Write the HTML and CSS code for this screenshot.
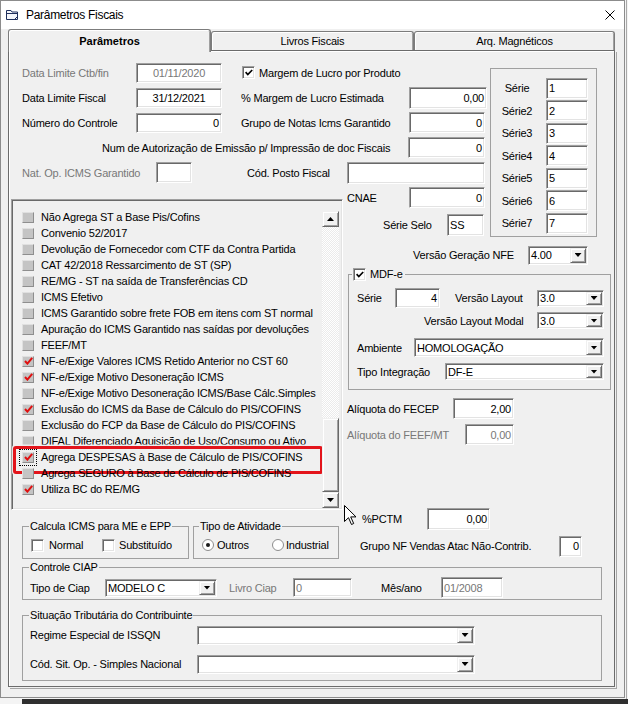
FILE: index.html
```html
<!DOCTYPE html>
<html lang="pt-BR">
<head>
<meta charset="utf-8">
<title>Parâmetros Fiscais</title>
<link rel="stylesheet" href="styles.css">
</head>
<body>
<div class="window">
  <div class="titlebar">
    <svg class="app-icon" width="13" height="12" viewBox="0 0 13 12">
      <path d="M0.5 1.5h4.5l1 1.5h5.5v7.5h-11z" fill="#f4f6fb" stroke="#1f2f5c"/>
      <path d="M0.5 4.5h11" stroke="#1f2f5c"/>
      <path d="M8.5 10.5l3-3" stroke="#1f2f5c"/>
    </svg>
    <span class="title">Parâmetros Fiscais</span>
    <svg class="close" width="10" height="10" viewBox="0 0 10 10"><path d="M0.5 0.5l9 9M9.5 0.5l-9 9" stroke="#000" fill="none"/></svg>
  </div>

  <div class="tabs">
    <div class="tab active">Parâmetros</div>
    <div class="tab">Livros Fiscais</div>
    <div class="tab last">Arq. Magnéticos</div>
  </div>

  <div class="panel">
    <div class="form-grid">
      <!-- top rows -->
      <div class="frow r1">
        <span class="lbl dis l-date">Data Limite Ctb/fin</span>
        <span class="edit c dis e-date">01/11/2020</span>
        <span class="chk chk-margem"><svg width="8" height="7" viewBox="0 0 8 7"><path d="M0.6 3.2l2.2 2.3L7.2 1" fill="none" stroke="#000" stroke-width="1.7"/></svg></span>
        <span class="lbl l-after-chk">Margem de Lucro por Produto</span>
      </div>
      <div class="frow r2">
        <span class="lbl l-date">Data Limite Fiscal</span>
        <span class="edit c e-date">31/12/2021</span>
        <span class="lbl l-mid">% Margem de Lucro Estimada</span>
        <span class="edit r e-margem">0,00</span>
      </div>
      <div class="frow r3">
        <span class="lbl l-date">Número do Controle</span>
        <span class="edit r e-date">0</span>
        <span class="lbl l-mid">Grupo de Notas Icms Garantido</span>
        <span class="edit r e-grupo">0</span>
      </div>
      <div class="frow r4">
        <span class="lbl l-autoriz">Num de Autorização de Emissão p/ Impressão de doc Fiscais</span>
        <span class="edit r e-autoriz">0</span>
      </div>
      <div class="frow r5">
        <span class="lbl dis l-natop">Nat. Op. ICMS Garantido</span>
        <span class="edit e-natop"></span>
        <span class="lbl l-posto">Cód. Posto Fiscal</span>
        <span class="edit e-posto"></span>
      </div>

      <!-- series box -->
      <div class="series">
        <div class="srow"><span class="lbl">Série</span><span class="edit">1</span></div>
        <div class="srow"><span class="lbl">Série2</span><span class="edit">2</span></div>
        <div class="srow"><span class="lbl">Série3</span><span class="edit">3</span></div>
        <div class="srow"><span class="lbl">Série4</span><span class="edit">4</span></div>
        <div class="srow"><span class="lbl">Série5</span><span class="edit">5</span></div>
        <div class="srow"><span class="lbl">Série6</span><span class="edit">6</span></div>
        <div class="srow"><span class="lbl">Série7</span><span class="edit">7</span></div>
      </div>

      <!-- left column: option list and small groups -->
      <div class="left">
        <div class="checklist">
          <div class="items">
            <div class="item"><span class="lchk"></span>Não Agrega ST a Base Pis/Cofins</div>
            <div class="item"><span class="lchk"></span>Convenio 52/2017</div>
            <div class="item"><span class="lchk"></span>Devolução de Fornecedor com CTF da Contra Partida</div>
            <div class="item"><span class="lchk"></span>CAT 42/2018 Ressarcimento de ST (SP)</div>
            <div class="item"><span class="lchk"></span>RE/MG - ST na saída de Transferências CD</div>
            <div class="item"><span class="lchk"></span>ICMS Efetivo</div>
            <div class="item"><span class="lchk"></span>ICMS Garantido sobre frete FOB em itens com ST normal</div>
            <div class="item"><span class="lchk"></span>Apuração do ICMS Garantido nas saídas por devoluções</div>
            <div class="item"><span class="lchk"></span>FEEF/MT</div>
            <div class="item"><span class="lchk"><svg width="9" height="8" viewBox="0 0 9 8"><path d="M1 4l2.4 2.6L8.2 0.8" fill="none" stroke="#e01010" stroke-width="2"/></svg></span>NF-e/Exige Valores ICMS Retido Anterior no CST 60</div>
            <div class="item"><span class="lchk"><svg width="9" height="8" viewBox="0 0 9 8"><path d="M1 4l2.4 2.6L8.2 0.8" fill="none" stroke="#e01010" stroke-width="2"/></svg></span>NF-e/Exige Motivo Desoneração ICMS</div>
            <div class="item"><span class="lchk"></span>NF-e/Exige Motivo Desoneração ICMS/Base Cálc.Simples</div>
            <div class="item"><span class="lchk"><svg width="9" height="8" viewBox="0 0 9 8"><path d="M1 4l2.4 2.6L8.2 0.8" fill="none" stroke="#e01010" stroke-width="2"/></svg></span>Exclusão do ICMS da Base de Cálculo do PIS/COFINS</div>
            <div class="item"><span class="lchk"></span>Exclusão do FCP da Base de Cálculo do PIS/COFINS</div>
            <div class="item"><span class="lchk"></span>DIFAL Diferenciado Aquisição de Uso/Consumo ou Ativo</div>
            <div class="item marked"><span class="lchk focus"><svg width="9" height="8" viewBox="0 0 9 8"><path d="M1 4l2.4 2.6L8.2 0.8" fill="none" stroke="#e01010" stroke-width="2"/></svg></span>Agrega DESPESAS à Base de Cálculo de PIS/COFINS</div>
            <div class="item"><span class="lchk"></span>Agrega SEGURO à Base de Cálculo de PIS/COFINS</div>
            <div class="item"><span class="lchk"><svg width="9" height="8" viewBox="0 0 9 8"><path d="M1 4l2.4 2.6L8.2 0.8" fill="none" stroke="#e01010" stroke-width="2"/></svg></span>Utiliza BC do RE/MG</div>
          </div>
          <div class="vscroll">
            <div class="sbtn up"></div>
            <div class="track"><div class="thumb"></div></div>
            <div class="sbtn down"></div>
          </div>
        </div>

        <div class="opts">
          <fieldset class="group g-icms">
            <legend>Calcula ICMS para ME e EPP</legend>
            <div class="optrow">
              <span class="chk"></span><span class="lbl o-normal">Normal</span>
              <span class="chk"></span><span class="lbl o-subst">Substituído</span>
            </div>
          </fieldset>
          <fieldset class="group g-ativ">
            <legend>Tipo de Atividade</legend>
            <div class="optrow">
              <svg class="radio" width="12" height="12" viewBox="0 0 12 12"><circle cx="6" cy="6" r="5.5" fill="#fff" stroke="#8c8c8c"/><circle cx="6" cy="6" r="2" fill="#1a1a1a"/></svg>
              <span class="lbl o-outros">Outros</span>
              <svg class="radio" width="12" height="12" viewBox="0 0 12 12"><circle cx="6" cy="6" r="5.5" fill="#fff" stroke="#8c8c8c"/></svg>
              <span class="lbl o-ind">Industrial</span>
            </div>
          </fieldset>
        </div>
      </div>

      <!-- right column -->
      <div class="frow r-cnae">
        <span class="lbl l-cnae">CNAE</span>
        <span class="edit r e-cnae">0</span>
      </div>
      <div class="frow r-selo">
        <span class="lbl l-selo">Série Selo</span>
        <span class="edit e-selo">SS</span>
      </div>
      <div class="frow r-nfe">
        <span class="lbl l-nfe">Versão Geração NFE</span>
        <span class="combo c-nfe"><span class="val">4.00</span><span class="cbtn"></span></span>
      </div>

      <fieldset class="group mdfe">
        <legend><span class="chk"><svg width="8" height="7" viewBox="0 0 8 7"><path d="M0.6 3.2l2.2 2.3L7.2 1" fill="none" stroke="#000" stroke-width="1.7"/></svg></span><span class="mdfe-cap">MDF-e</span></legend>
        <div class="mrow m-a">
          <span class="lbl l-mserie">Série</span>
          <span class="edit r e-mserie">4</span>
          <span class="lbl l-vlayout">Versão Layout</span>
          <span class="combo c-layout"><span class="val">3.0</span><span class="cbtn"></span></span>
        </div>
        <div class="mrow m-b">
          <span class="lbl l-vmodal">Versão Layout Modal</span>
          <span class="combo c-layout"><span class="val">3.0</span><span class="cbtn"></span></span>
        </div>
        <div class="mrow m-c">
          <span class="lbl l-amb">Ambiente</span>
          <span class="combo c-amb"><span class="val">HOMOLOGAÇÃO</span><span class="cbtn"></span></span>
        </div>
        <div class="mrow m-d">
          <span class="lbl l-tipo">Tipo Integração</span>
          <span class="combo c-tipo"><span class="val">DF-E</span><span class="cbtn"></span></span>
        </div>
      </fieldset>

      <div class="frow r-fecep">
        <span class="lbl l-fecep">Alíquota do FECEP</span>
        <span class="edit r e-fecep">2,00</span>
      </div>
      <div class="frow r-feef">
        <span class="lbl dis l-feef">Alíquota do FEEF/MT</span>
        <span class="edit r dis e-feef">0,00</span>
      </div>
      <div class="frow r-pctm">
        <span class="lbl l-pctm">%PCTM</span>
        <span class="edit r e-pctm">0,00</span>
      </div>
      <div class="frow r-grnf">
        <span class="lbl l-grnf">Grupo NF Vendas Atac Não-Contrib.</span>
        <span class="edit r e-grnf">0</span>
      </div>
    </div>

    <fieldset class="group ciap">
      <legend>Controle CIAP</legend>
      <div class="crow">
        <span class="lbl l-tciap">Tipo de Ciap</span>
        <span class="combo c-ciap"><span class="val">MODELO C</span><span class="cbtn"></span></span>
        <span class="lbl dis l-livro">Livro Ciap</span>
        <span class="edit dis e-livro">0</span>
        <span class="lbl l-mes">Mês/ano</span>
        <span class="edit dis e-mes">01/2008</span>
      </div>
    </fieldset>

    <fieldset class="group situacao">
      <legend>Situação Tributária do Contribuinte</legend>
      <div class="strow st-1">
        <span class="lbl l-sit">Regime Especial de ISSQN</span>
        <span class="combo c-sit"><span class="val"></span><span class="cbtn"></span></span>
      </div>
      <div class="strow st-2">
        <span class="lbl l-sit">Cód. Sit. Op. - Simples Nacional</span>
        <span class="combo c-sit"><span class="val"></span><span class="cbtn"></span></span>
      </div>
    </fieldset>
  </div>
</div>

<svg class="cursor" width="13" height="21" viewBox="0 0 13 21"><path d="M0.5 0.5v16l4-3.8 3 6.8 2.2-1-3-6.6h5.3z" fill="#fff" stroke="#000"/></svg>
</body>
</html>
```

FILE: styles.css
```css
* { box-sizing: border-box; }

html, body { margin: 0; padding: 0; }

body {
  width: 628px;
  height: 704px;
  overflow: hidden;
  position: relative;
  font-family: "Liberation Sans", Arial, sans-serif;
  font-size: 11px;
  letter-spacing: -0.2px;
  color: #000;
  background:
    linear-gradient(#2f2f2f, #2f2f2f) 22px 699px / 606px 5px no-repeat,
    linear-gradient(#a9a9a9, #a9a9a9) 626px 0 / 1px 699px no-repeat,
    #f4f4f4;
}

/* ---------- window chrome ---------- */
.window {
  width: 625px;
  height: 698px;
  border: 1px solid #8c8c8c;
  background: #f0f0f0;
}

.titlebar {
  height: 28px;
  background: #fff;
  display: flex;
  align-items: center;
}
.app-icon { margin-left: 5px; flex: none; }
.title { margin-left: 7px; font-size: 12px; letter-spacing: -0.3px; }
.close { margin-left: auto; margin-right: 9px; }

.tabs {
  display: flex;
  align-items: flex-end;
  height: 21px;
  margin-left: 7px;
}
.tab {
  flex: none;
  width: 203px;
  height: 19px;
  border: 1px solid #7c7c7c;
  border-bottom: 0;
  border-radius: 3px 3px 0 0;
  box-shadow: inset 1px 1px 0 #fff, inset -1px 0 0 #a0a0a0;
  background: #f0f0f0;
  text-align: center;
  line-height: 18px;
}
.tab.last { width: 201px; }
.tab.active {
  height: 23px;
  margin-bottom: -2px;
  position: relative;
  z-index: 1;
  font-weight: bold;
  letter-spacing: 0;
  line-height: 23px;
}

.panel {
  width: 607px;
  height: 637px;
  margin-left: 7px;
  border: 1px solid #6b6b6b;
  box-shadow: inset 1px 1px 0 #fff, 1px 1px 0 #f0f0f0, 2px 2px 0 #a5a5a5;
  padding: 9px 0 0 1px;
}

/* ---------- common controls ---------- */
.lbl { flex: none; white-space: nowrap; }
.dis { color: #787878; }

.edit,
.combo {
  flex: none;
  display: flex;
  align-items: center;
  background: #fff;
  border: 1px solid;
  border-color: #a0a0a0 #fff #fff #a0a0a0;
  box-shadow: inset 1px 1px 0 #696969, inset -1px -1px 0 #e3e3e3;
  white-space: nowrap;
  overflow: hidden;
}
.edit { padding: 0 2px; }
.edit.r { justify-content: flex-end; }
.edit.c { justify-content: center; }

.combo { padding-left: 2px; }
.combo .val { flex: 1; }
.cbtn {
  flex: none;
  width: 16px;
  align-self: stretch;
  margin: 1px;
  display: flex;
  align-items: center;
  justify-content: center;
  background: #f0f0f0;
  border: 1px solid;
  border-color: #f0f0f0 #696969 #696969 #f0f0f0;
  box-shadow: inset 1px 1px 0 #fff, inset -1px -1px 0 #a0a0a0;
}
.cbtn::after {
  content: "";
  width: 7px;
  height: 4px;
  background: #000;
  clip-path: polygon(0 0, 100% 0, 50% 100%);
}

.chk {
  flex: none;
  width: 13px;
  height: 13px;
  background: #fff;
  border: 1px solid;
  border-color: #a0a0a0 #fff #fff #a0a0a0;
  box-shadow: inset 1px 1px 0 #696969, inset -1px -1px 0 #e3e3e3;
  display: flex;
  align-items: center;
  justify-content: center;
}
.chk svg { display: block; }

fieldset.group {
  margin: 0;
  padding: 0;
  min-width: 0;
  border: 1px solid #a0a0a0;
}
fieldset.group legend {
  padding: 0 1px;
  margin-left: 6px;
  height: 14px;
  line-height: 14px;
}

/* ---------- main form grid ---------- */
.form-grid {
  display: grid;
  grid-template-columns: 335px 144px 125px;
  grid-template-rows: 25px 25px 25px 25px 25px 25px 30px 27px 125px 29px 27px 58px 26px 28px;
}
.frow { display: flex; align-items: center; }

.r1 { grid-column: 1 / 3; grid-row: 1; }
.r2 { grid-column: 1 / 3; grid-row: 2; }
.r3 { grid-column: 1 / 3; grid-row: 3; }
.r4 { grid-column: 1 / 3; grid-row: 4; }
.r5 { grid-column: 1 / 3; grid-row: 5; }

.l-date { margin-left: 12px; width: 114px; }
.e-date { width: 86px; height: 20px; }
.chk-margem { margin-left: 20px; }
.l-after-chk { margin-left: 4px; }
.l-mid { margin-left: 19px; width: 168px; }
.e-margem { width: 78px; height: 22px; }
.e-grupo { width: 76px; height: 21px; }
.l-autoriz { margin-left: 92px; width: 306px; }
.e-autoriz { width: 77px; height: 21px; }
.l-natop { margin-left: 12px; width: 134px; }
.e-natop { width: 36px; height: 21px; }
.l-posto { margin-left: 55px; width: 100px; }
.e-posto { width: 138px; height: 22px; }

/* series box */
.series {
  grid-column: 3;
  grid-row: 1 / 8;
  margin: 8px 0 0 1px;
  width: 107px;
  height: 169px;
  border: 1px solid #a0a0a0;
  padding-top: 8px;
}
.srow { display: flex; align-items: center; height: 22.5px; }
.srow .lbl { width: 52px; text-align: center; }
.srow .edit { margin-left: 3px; width: 42px; height: 21px; }

/* left column */
.left {
  grid-column: 1;
  grid-row: 6 / 15;
  display: flex;
  flex-direction: column;
}
.checklist {
  margin: 14px 0 0 1px;
  width: 332px;
  height: 311px;
  display: flex;
  padding: 0 3px 1px 0;
  border: 1px solid;
  border-color: #a0a0a0 #fff #fff #a0a0a0;
  box-shadow: inset 1px 1px 0 #696969, inset -1px -1px 0 #e3e3e3;
}
.items {
  width: 310px;
  flex: none;
  padding: 9px 0 0 10px;
  overflow: hidden;
}
.item {
  position: relative;
  height: 16px;
  display: flex;
  align-items: center;
  white-space: nowrap;
}
.lchk {
  flex: none;
  width: 12px;
  height: 11px;
  margin-right: 7px;
  background: #c4c4c4;
  border: 1px solid;
  border-color: #e0e0e0 #8e8e8e #8e8e8e #e0e0e0;
  display: flex;
  align-items: center;
  justify-content: center;
}
.lchk svg { display: block; }
.lchk.focus { outline: 1px dotted #000; outline-offset: 2px; }
.item.marked::after {
  content: "";
  position: absolute;
  left: -9px;
  top: -3px;
  width: 304px;
  height: 22px;
  border: 3px solid #e3141b;
  border-radius: 3px;
  box-shadow: 0 0 0 1.5px rgba(240, 240, 240, 0.9);
  pointer-events: none;
}

.vscroll {
  width: 17px;
  flex: none;
  margin-top: 11px;
  display: flex;
  flex-direction: column;
}
.sbtn,
.thumb {
  background: #f0f0f0;
  border: 1px solid;
  border-color: #f0f0f0 #696969 #696969 #f0f0f0;
  box-shadow: inset 1px 1px 0 #fff, inset -1px -1px 0 #a0a0a0;
}
.sbtn {
  height: 16px;
  flex: none;
  display: flex;
  align-items: center;
  justify-content: center;
}
.sbtn::after {
  content: "";
  width: 7px;
  height: 4px;
  background: #000;
}
.sbtn.up::after { clip-path: polygon(50% 0, 100% 100%, 0 100%); }
.sbtn.down::after { clip-path: polygon(0 0, 100% 0, 50% 100%); }
.track {
  flex: 1;
  display: flex;
  flex-direction: column;
  justify-content: flex-end;
  background: repeating-conic-gradient(#fff 0 25%, #ebebeb 0 50%) 0 0 / 2px 2px;
}
.thumb { height: 74px; }

.opts { display: flex; margin: 9px 0 0 12px; }
fieldset.g-icms { width: 167px; height: 40px; }
fieldset.g-ativ { width: 146px; height: 40px; margin-left: 4px; }
fieldset.g-ativ legend { margin-left: 5px; }
.optrow {
  display: flex;
  align-items: center;
  height: 14px;
  margin-top: 5px;
  padding-left: 8px;
}
.o-normal { margin-left: 5px; width: 53px; }
.o-subst { margin-left: 4px; }
.radio { flex: none; display: block; }
.o-outros { margin-left: 3px; width: 55px; }
.o-ind { margin-left: 2px; }

/* right column */
.r-cnae { grid-column: 2; grid-row: 6; }
.r-selo { grid-column: 2; grid-row: 7; }
.r-nfe { grid-column: 2 / 4; grid-row: 8; padding-top: 3px; }
.l-cnae { margin-left: 2px; width: 62px; }
.e-cnae { width: 76px; height: 21px; }
.l-selo { margin-left: 38px; width: 64px; }
.e-selo { width: 37px; height: 22px; }
.l-nfe { margin-left: 68px; width: 115px; }
.c-nfe { width: 60px; height: 19px; }

fieldset.mdfe {
  grid-column: 2 / 4;
  grid-row: 9;
  margin-left: 3px;
  width: 263px;
  height: 123px;
}
fieldset.mdfe legend {
  margin-left: 3px;
  padding: 0 2px 0 1px;
  display: flex;
  align-items: center;
}
.mdfe-cap { margin-left: 4px; }
.mrow { display: flex; align-items: center; padding-left: 8px; }
.m-a { margin-top: 6px; height: 22px; }
.m-b { margin-top: 1px; height: 21px; }
.m-c { margin-top: 6px; height: 21px; }
.m-d { margin-top: 4px; height: 19px; }
.l-mserie { width: 38px; }
.e-mserie { width: 45px; height: 20px; }
.l-vlayout { margin-left: 15px; width: 82px; }
.c-layout { width: 67px; height: 17px; }
.l-vmodal { margin-left: 67px; width: 113px; }
.l-amb { width: 57px; }
.c-amb { width: 190px; height: 19px; }
.l-tipo { width: 88px; }
.c-tipo { width: 159px; height: 17px; }

.r-fecep { grid-column: 2 / 4; grid-row: 10; padding-top: 4px; }
.r-feef { grid-column: 2 / 4; grid-row: 11; }
.r-pctm { grid-column: 2 / 4; grid-row: 13; }
.r-grnf { grid-column: 2 / 4; grid-row: 14; }
.l-fecep { margin-left: 2px; width: 106px; }
.e-fecep { width: 61px; height: 21px; }
.l-feef { margin-left: 2px; width: 118px; }
.e-feef { width: 49px; height: 21px; }
.l-pctm { margin-left: 17px; width: 65px; }
.e-pctm { width: 63px; height: 22px; }
.l-grnf { margin-left: 15px; width: 199px; }
.e-grnf { width: 23px; height: 21px; }

/* lower groups */
fieldset.ciap { margin: 0 0 0 12px; width: 580px; height: 40px; }
.crow {
  display: flex;
  align-items: center;
  height: 21px;
  margin-top: 3px;
  padding-left: 7px;
}
.l-tciap { width: 75px; }
.c-ciap { width: 112px; height: 18px; }
.l-livro { margin-left: 12px; width: 64px; }
.e-livro { width: 59px; height: 19px; }
.l-mes { margin-left: 29px; width: 60px; }
.e-mes { width: 62px; height: 21px; }

fieldset.situacao { margin: 8px 0 0 12px; width: 580px; height: 73px; }
.strow {
  display: flex;
  align-items: center;
  height: 20px;
  padding-left: 7px;
}
.st-1 { margin-top: 3px; }
.st-2 { margin-top: 9px; }
.l-sit { width: 167px; }
.c-sit { width: 278px; height: 19px; }

/* mouse pointer */
.cursor {
  position: absolute;
  left: 344px;
  top: 505px;
}
```
